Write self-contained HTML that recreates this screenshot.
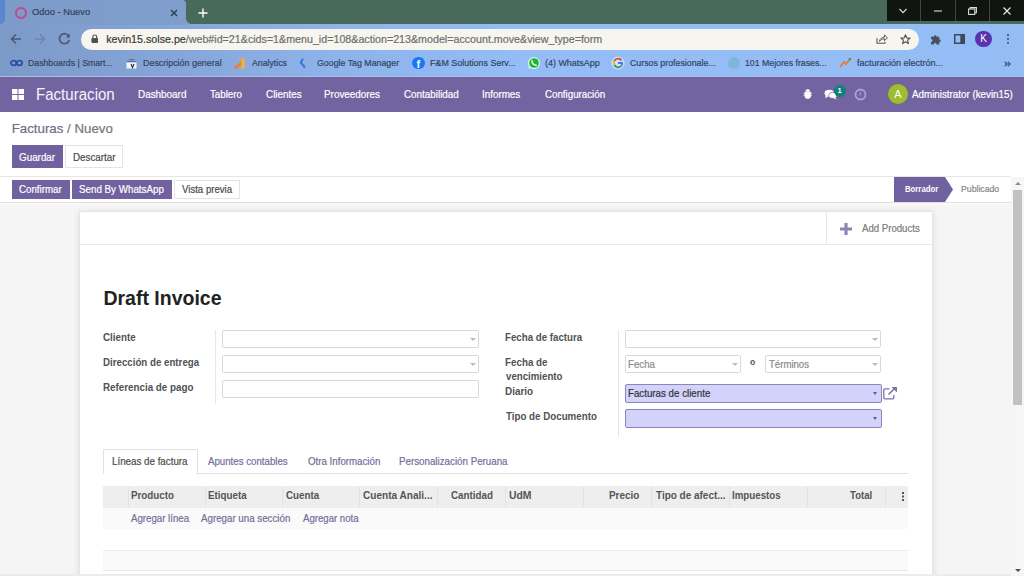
<!DOCTYPE html>
<html><head><meta charset="utf-8">
<style>
*{box-sizing:border-box;margin:0;padding:0}
html,body{width:1024px;height:576px;overflow:hidden;background:#f5f5f5;font-family:"Liberation Sans",sans-serif;position:relative}
.a{position:absolute;white-space:nowrap}
.t{position:absolute;white-space:nowrap;line-height:1;transform-origin:0 0}
/* chrome */
#titlebar{left:0;top:0;width:1024px;height:24px;background:#486a5b}
#chromebar{left:0;top:24px;width:1024px;height:53px;background:linear-gradient(90deg,#7c9ac7 0px,#86a6da 180px,#8db3ea 330px,#94bcf6 520px,#95bdf5 1024px)}
#tab{left:0;top:0;width:186px;height:25px;background:linear-gradient(90deg,#7d9bc8 0,#809ecc 181px);border-radius:2px 4px 0 0}
#leftstrip{left:0;top:0;width:5px;height:24px;background:#5a86cf;border-radius:0 0 6px 0}
#winctl{left:887px;top:0;width:137px;height:21px;background:#111512}
.sep{position:absolute;top:0;width:1px;height:21px;background:#3a4a40}
#nav{left:0;top:77px;width:1024px;height:35px;background:#7164a0}
#cp{left:0;top:112px;width:1024px;height:65px;background:#fff}
#status{left:0;top:176px;width:1011px;height:27px;background:#fff;border-top:1px solid #e6e6e6;border-bottom:1px solid #e2e2e2}
.btnp{position:absolute;background:#7062a0;color:#fff;font-size:9.8px;line-height:1}
.btnw{position:absolute;background:#fff;border:1px solid #e4e4e4;color:#444;font-size:9.8px;line-height:1}
#sheet{left:79px;top:211px;width:854px;height:380px;background:#fff;border:1px solid #e4e4e4;box-shadow:0 1px 7px rgba(0,0,0,.1)}
.lbl{position:absolute;font-weight:bold;font-size:9.75px;color:#4e4e4e;line-height:1;white-space:nowrap}
.inp{position:absolute;height:18px;border:1px solid #d9d9d9;border-radius:2px;background:#fff}
.req{position:absolute;background:#d2d2fb;border:1px solid #8a86b8;border-radius:2px}
.caret{position:absolute;width:0;height:0;border-left:3px solid transparent;border-right:3px solid transparent;border-top:3px solid #bbb}
.th{position:absolute;font-weight:bold;font-size:9.75px;color:#555;line-height:1;white-space:nowrap}
.vs{position:absolute;top:486px;width:1px;height:21px;background:#e2e2e2}
</style></head><body>
<div id="titlebar" class="a"></div>
<div id="chromebar" class="a"></div>
<div id="tab" class="a"></div>
<div id="leftstrip" class="a"></div>
<div class="a" style="left:186px;top:19px;width:5px;height:5px;background:radial-gradient(circle at 100% 0,#486a5b 4.5px,#809ecc 5px)"></div>
<!-- tab content -->
<div class="a" style="left:15px;top:6.5px;width:12px;height:12px;border:2.8px solid #c8448f;border-radius:50%"></div>
<svg class="a" style="left:170px;top:8.5px" width="8" height="8" viewBox="0 0 8 8"><path d="M1 1L7 7M7 1L1 7" stroke="#2c3a55" stroke-width="1.4"/></svg>
<svg class="a" style="left:197.5px;top:7.8px" width="10" height="10" viewBox="0 0 10 10"><path d="M5 0.5V9.5M0.5 5H9.5" stroke="#fff" stroke-width="1.4"/></svg>
<div id="winctl" class="a">
  <div class="sep" style="left:33px"></div><div class="sep" style="left:68px"></div><div class="sep" style="left:102px"></div>
  <svg class="a" style="left:12px;top:8px" width="8" height="6" viewBox="0 0 8 6"><path d="M0.5 1L4 4.6L7.5 1" stroke="#ddd" stroke-width="1.1" fill="none"/></svg>
  <svg class="a" style="left:47px;top:10px" width="8" height="2" viewBox="0 0 8 2"><path d="M0 1H8" stroke="#ddd" stroke-width="1.1"/></svg>
  <svg class="a" style="left:80.5px;top:6.5px" width="9" height="8" viewBox="0 0 9 8"><rect x="0.6" y="2" width="6.2" height="5.4" fill="none" stroke="#ddd" stroke-width="1.1"/><path d="M2.2 2V0.6H8.4V5.8H6.8" fill="none" stroke="#ddd" stroke-width="1.1"/></svg>
  <svg class="a" style="left:116px;top:6.8px" width="8" height="8" viewBox="0 0 8 8"><path d="M0.5 0.5L7.5 7.5M7.5 0.5L0.5 7.5" stroke="#eee" stroke-width="1.1"/></svg>
</div>
<!-- toolbar -->
<svg class="a" style="left:9px;top:31.5px" width="14" height="14" viewBox="0 0 14 14"><path d="M12 7H2.5M7 2.5L2.5 7L7 11.5" stroke="#4a5a70" stroke-width="1.6" fill="none"/></svg>
<svg class="a" style="left:33px;top:31.5px" width="14" height="14" viewBox="0 0 14 14"><path d="M2 7H11.5M7 2.5L11.5 7L7 11.5" stroke="#7287a8" stroke-width="1.6" fill="none"/></svg>
<svg class="a" style="left:57px;top:30.5px" width="15" height="15" viewBox="0 0 15 15"><path d="M11.8 5.2A5 5 0 1 0 12.3 9" stroke="#4a5a70" stroke-width="1.7" fill="none"/><path d="M12.8 2.5V6.5H8.8Z" fill="#4a5a70"/></svg>
<div class="a" style="left:81px;top:29px;width:838px;height:21px;background:#f7f6ee;border-radius:11px"></div>
<svg class="a" style="left:90.5px;top:33.5px" width="7.5" height="9.5" viewBox="0 0 9 11"><rect x="0.5" y="4.5" width="8" height="6" rx="1" fill="#505050"/><path d="M2.2 4.8V3.2A2.3 2.3 0 0 1 6.8 3.2V4.8" stroke="#505050" stroke-width="1.3" fill="none"/></svg>
<svg class="a" style="left:875.5px;top:34px" width="12" height="10" viewBox="0 0 12 10"><path d="M1 4V9.3H9V7.8" stroke="#5a5a5a" stroke-width="1.1" fill="none"/><path d="M3.5 7.5C3.8 4.5 6 3.2 8.5 3.2V1L11.5 3.8L8.5 6.6V4.8C6.5 4.8 4.8 5.6 3.5 7.5Z" stroke="#5a5a5a" stroke-width="1" fill="none" stroke-linejoin="round"/></svg>
<svg class="a" style="left:900px;top:33.5px" width="11" height="11" viewBox="0 0 11 11"><path d="M5.5 0.8L6.8 3.9L10.1 4.1L7.6 6.2L8.4 9.6L5.5 7.8L2.6 9.6L3.4 6.2L0.9 4.1L4.2 3.9Z" stroke="#4a4a4a" stroke-width="1.1" fill="none" stroke-linejoin="round"/></svg>
<svg class="a" style="left:929.5px;top:33.5px" width="12" height="11" viewBox="0 0 12 11"><path d="M1 2.8H3.6A1.5 1.5 0 0 1 6.6 2.8H9.2V5.2A1.5 1.5 0 0 1 9.2 8.2V10.5H6.6A1.5 1.5 0 0 0 3.6 10.5H1V8A1.5 1.5 0 0 0 1 5Z" fill="#46515e"/></svg>
<svg class="a" style="left:954px;top:34px" width="11" height="10" viewBox="0 0 11 10"><rect x="0.75" y="0.75" width="9.5" height="8.5" stroke="#3e4a5a" stroke-width="1.5" fill="none"/><rect x="6.3" y="0.75" width="4" height="8.5" fill="#3e4a5a"/></svg>
<div class="a" style="left:975.2px;top:30.8px;width:16.6px;height:16.6px;border-radius:50%;background:#5a32ae;color:#fff;font-size:10px;line-height:16.6px;text-align:center">K</div>
<svg class="a" style="left:1005.5px;top:34px" width="4" height="10" viewBox="0 0 4 10"><circle cx="2" cy="1.2" r="1.1" fill="#4a5868"/><circle cx="2" cy="5" r="1.1" fill="#4a5868"/><circle cx="2" cy="8.8" r="1.1" fill="#4a5868"/></svg>
<!-- bookmarks -->
<svg class="a" style="left:10px;top:59px" width="13" height="8" viewBox="0 0 13 8"><ellipse cx="3.6" cy="4" rx="2.7" ry="2.3" stroke="#2950a6" stroke-width="1.8" fill="none"/><ellipse cx="9.4" cy="4" rx="2.7" ry="2.3" stroke="#2950a6" stroke-width="1.8" fill="none"/></svg>
<svg class="a" style="left:126px;top:58px" width="11" height="11" viewBox="0 0 11 11"><rect x="0.5" y="3" width="10" height="7.5" fill="#f2f5fc"/><rect x="0.5" y="3" width="10" height="1.3" fill="#5b6f99"/><rect x="3" y="1" width="5" height="1.2" fill="#5b6f99"/><path d="M5 6L6.5 9.5L8 6" stroke="#333" stroke-width="1.2" fill="none"/></svg>
<svg class="a" style="left:234px;top:57px" width="12" height="12" viewBox="0 0 12 12"><path d="M1.5 10.5L7.5 6" stroke="#e8833a" stroke-width="3" stroke-linecap="round"/><path d="M9 2V10.5" stroke="#f5b031" stroke-width="3.4" stroke-linecap="round"/></svg>
<svg class="a" style="left:299px;top:58px" width="9" height="11" viewBox="0 0 9 11"><path d="M3.5 1.5L1.8 4.5L5.5 9" stroke="#3a78d8" stroke-width="2.2" fill="none" stroke-linecap="round"/></svg>
<div class="a" style="left:412px;top:56.5px;width:12.5px;height:12.5px;border-radius:50%;background:#1877f2;color:#fff;font-weight:bold;font-size:11px;line-height:15px;text-align:center;overflow:hidden">f</div>
<svg class="a" style="left:527px;top:56px" width="14" height="14" viewBox="0 0 14 14"><path d="M7 1A6 6 0 1 1 3.6 12L1.2 12.8L2 10.4A6 6 0 0 1 7 1Z" fill="#d9f7de"/><circle cx="7" cy="7" r="4.8" fill="#1fb23a"/><path d="M5 4.5C5 7 6.5 9 9.2 9.3" stroke="#d9f7de" stroke-width="1.6" fill="none" stroke-linecap="round"/></svg>
<svg class="a" style="left:611px;top:56px" width="14" height="14" viewBox="0 0 14 14"><circle cx="7" cy="7" r="6.5" fill="#e4f0fb" opacity="0.7"/><path d="M10.6 4.6A4.2 4.2 0 0 0 3.2 5.2" stroke="#d8483a" stroke-width="1.8" fill="none"/><path d="M3.2 5.2A4.2 4.2 0 0 0 3.4 9" stroke="#f2b21c" stroke-width="1.8" fill="none"/><path d="M3.4 9A4.2 4.2 0 0 0 10.2 10" stroke="#2f9b50" stroke-width="1.8" fill="none"/><path d="M10.2 10A4.2 4.2 0 0 0 11.2 7H7" stroke="#3f7de8" stroke-width="1.8" fill="none"/></svg>
<div class="a" style="left:728px;top:57px;width:12px;height:12px;border-radius:50%;background:#7fb7d8"></div>
<svg class="a" style="left:839px;top:57px" width="12" height="11" viewBox="0 0 12 11"><path d="M1 10L5 5L7 7L11 2" stroke="#e07b39" stroke-width="1.8" fill="none"/><circle cx="11" cy="2" r="1.3" fill="#2e9e5b"/></svg>
<svg class="a" style="left:1003.5px;top:60.5px" width="7" height="6" viewBox="0 0 7 6"><path d="M0.8 0.8L3 3L0.8 5.2M3.8 0.8L6 3L3.8 5.2" stroke="#34445e" stroke-width="1.2" fill="none"/></svg>
<div class="a" style="left:0;top:76px;width:1024px;height:1px;background:#aebce6"></div>
<!-- odoo nav -->
<div id="nav" class="a"></div>
<svg class="a" style="left:12px;top:89px" width="12" height="11" viewBox="0 0 12 11"><rect x="0" y="0" width="5.5" height="5" fill="#fff"/><rect x="6.5" y="0" width="5.5" height="5" fill="#fff"/><rect x="0" y="6" width="5.5" height="5" fill="#fff"/><rect x="6.5" y="6" width="5.5" height="5" fill="#fff"/></svg>
<svg class="a" style="left:802.5px;top:89.3px" width="9.5" height="9.5" viewBox="0 0 10 10"><path d="M3 2.5A2 2 0 0 1 7 2.5Z M2 3.5H8V7A3 3 0 0 1 2 7Z M0.5 4.5H2M8 4.5H9.5M0.5 7H2M8 7H9.5" fill="#fff" stroke="#fff" stroke-width="0.8"/></svg>
<svg class="a" style="left:823.5px;top:88.5px" width="14" height="11" viewBox="0 0 15 12"><ellipse cx="5.5" cy="4.5" rx="5" ry="3.6" fill="#fff"/><path d="M2 7L1 10L5 8Z" fill="#fff"/><ellipse cx="9.5" cy="7" rx="4.5" ry="3.2" fill="#fff" stroke="#7164a0" stroke-width="0.8"/><path d="M12 9L13.5 11.5L10 10Z" fill="#fff"/></svg>
<div class="a" style="left:833.5px;top:84.5px;width:12px;height:12px;border-radius:50%;background:#10807a;color:#fff;font-size:7.5px;font-weight:bold;line-height:12px;text-align:center">1</div>
<svg class="a" style="left:854px;top:87.5px" width="13" height="13" viewBox="0 0 13 13"><circle cx="6.5" cy="6.5" r="5" stroke="#aaa2cf" stroke-width="1.8" fill="none"/><path d="M6.5 3.8V6.8H4.8" stroke="#9d95c4" stroke-width="1.1" fill="none"/></svg>
<div class="a" style="left:888px;top:84px;width:20px;height:20px;border-radius:50%;background:#9fbd2e;color:#fff;font-size:11px;line-height:20px;text-align:center">A</div>
<!-- control panel -->
<div id="cp" class="a"></div>
<div class="btnp" style="left:12px;top:145px;width:51px;height:23px"></div>
<div class="btnw" style="left:65px;top:145px;width:57.5px;height:23px"></div>
<div id="status" class="a"></div>
<div class="a" style="left:0;top:203px;width:1011px;height:4px;background:linear-gradient(#f9f9f9,#f5f5f5)"></div>
<div class="btnp" style="left:12px;top:180px;width:58px;height:19px"></div>
<div class="btnp" style="left:72px;top:180px;width:99.5px;height:19px"></div>
<div class="btnw" style="left:174px;top:180px;width:66px;height:19px"></div>
<svg class="a" style="left:894px;top:177px" width="60" height="25" viewBox="0 0 60 25"><path d="M0 0H51L59 12.5L51 25H0Z" fill="#7062a0"/></svg>
<!-- scrollbar -->
<div class="a" style="left:1011px;top:177px;width:13px;height:399px;background:#f6f6f6"></div>
<div class="a" style="left:1013px;top:190px;width:9px;height:215px;background:#c1c1c1"></div>
<div class="caret" style="left:1014.5px;top:569px;border-top-color:#505050"></div>
<div class="a" style="left:1014.5px;top:182px;width:0;height:0;border-left:3.5px solid transparent;border-right:3.5px solid transparent;border-bottom:3.5px solid #8a8a8a"></div>
<!-- sheet -->
<div id="sheet" class="a"></div>
<div class="a" style="left:80px;top:244px;width:852px;height:1px;background:#e8e8e8"></div>
<div class="a" style="left:826px;top:212px;width:1px;height:32px;background:#e8e8e8"></div>
<svg class="a" style="left:839px;top:222px" width="14" height="14" viewBox="0 0 14 14"><path d="M7 1V13M1 7H13" stroke="#8c86b4" stroke-width="3.2"/></svg>
<!-- left group -->
<div class="a" style="left:215px;top:330px;width:1px;height:74px;background:#e6e6e6"></div>
<div class="inp" style="left:222px;top:330px;width:257px"></div>
<div class="inp" style="left:222px;top:355px;width:257px"></div>
<div class="inp" style="left:222px;top:379.5px;width:257px"></div>
<div class="caret" style="left:470px;top:338px"></div>
<div class="caret" style="left:470px;top:363px"></div>
<!-- right group -->
<div class="a" style="left:617.5px;top:330px;width:1px;height:107px;background:#e6e6e6"></div>
<div class="inp" style="left:624.5px;top:330px;width:256.5px"></div>
<div class="caret" style="left:872px;top:338px"></div>
<div class="inp" style="left:624.5px;top:355px;width:116.5px"></div>
<div class="caret" style="left:732px;top:363px"></div>
<div class="t" style="left:750px;top:358px;font-size:8.5px;font-weight:bold;color:#555">o</div>
<div class="inp" style="left:764.5px;top:355px;width:116.5px"></div>
<div class="caret" style="left:872px;top:363px"></div>
<div class="req" style="left:624.5px;top:384px;width:257.5px;height:19px"></div>
<div class="a" style="left:873px;top:392px;width:0;height:0;border-left:2.8px solid transparent;border-right:2.8px solid transparent;border-top:3.2px solid #5f5b94"></div>
<div class="req" style="left:624.5px;top:408.5px;width:257.5px;height:19px"></div>
<div class="a" style="left:873px;top:417px;width:0;height:0;border-left:2.8px solid transparent;border-right:2.8px solid transparent;border-top:3.2px solid #5f5b94"></div>
<svg class="a" style="left:883px;top:386px" width="15" height="14" viewBox="0 0 15 14"><path d="M6.5 2.8H1.8A1 1 0 0 0 0.8 3.8V11.8A1 1 0 0 0 1.8 12.8H9.8A1 1 0 0 0 10.8 11.8V9" stroke="#7a76a6" stroke-width="1.3" fill="none"/><path d="M5.5 8.5L12 2" stroke="#7a76a6" stroke-width="1.6"/><path d="M8.5 1H14V6.5Z" fill="#7a76a6"/></svg>
<!-- tabs -->
<div class="a" style="left:103px;top:473px;width:805px;height:1px;background:#e2e2e2"></div>
<div class="a" style="left:103px;top:448.5px;width:94.5px;height:25.5px;background:#fff;border:1px solid #e2e2e2;border-bottom:none"></div>
<!-- table -->
<div class="a" style="left:103px;top:486px;width:805px;height:21.5px;background:#eeeeee"></div>
<div class="vs" style="left:127.5px"></div>
<div class="vs" style="left:204.5px"></div>
<div class="vs" style="left:282px"></div>
<div class="vs" style="left:359px"></div>
<div class="vs" style="left:436.5px"></div>
<div class="vs" style="left:505px"></div>
<div class="vs" style="left:582.5px"></div>
<div class="vs" style="left:651px"></div>
<div class="vs" style="left:728.5px"></div>
<div class="vs" style="left:807px"></div>
<div class="vs" style="left:884.5px"></div>
<svg class="a" style="left:901px;top:491px" width="4" height="10" viewBox="0 0 4 10"><rect x="1" y="1" width="2" height="2" fill="#555"/><rect x="1" y="4.5" width="2" height="2" fill="#555"/><rect x="1" y="8" width="2" height="2" fill="#555"/></svg>
<div class="a" style="left:103px;top:508px;width:805px;height:21px;background:#fafafa"></div>
<div class="a" style="left:103px;top:550px;width:805px;height:1px;background:#ececec"></div>
<div class="a" style="left:103px;top:551px;width:805px;height:19px;background:#fafafa"></div>
<div class="a" style="left:103px;top:570px;width:805px;height:1px;background:#e6e6e6"></div>
<div class="a" style="left:0;top:574px;width:1011px;height:2px;background:#ececec"></div>
<div class="t" style="left:32.43px;top:7.23px;font-size:9.8px;-webkit-text-stroke:0.2px currentColor;color:#33425e;transform:scaleX(0.9541);">Odoo - Nuevo</div>
<div class="t" style="left:106.16px;top:33.89px;font-size:10.7px;-webkit-text-stroke:0.2px currentColor;color:#6e6e6e;"><span style="color:#3a3a3a">kevin15.solse.pe</span>/web#id=21&amp;cids=1&amp;menu_id=108&amp;action=213&amp;model=account.move&amp;view_type=form</div>
<div class="t" style="left:28.00px;top:57.88px;font-size:9.5px;-webkit-text-stroke:0.2px currentColor;color:#34445e;transform:scaleX(0.9180);">Dashboards | Smart...</div>
<div class="t" style="left:143.19px;top:57.88px;font-size:9.5px;-webkit-text-stroke:0.2px currentColor;color:#34445e;transform:scaleX(0.9369);">Descripción general</div>
<div class="t" style="left:252.20px;top:57.88px;font-size:9.5px;-webkit-text-stroke:0.2px currentColor;color:#34445e;transform:scaleX(0.9171);">Analytics</div>
<div class="t" style="left:317.16px;top:57.88px;font-size:9.5px;-webkit-text-stroke:0.2px currentColor;color:#34445e;transform:scaleX(0.9271);">Google Tag Manager</div>
<div class="t" style="left:429.69px;top:57.88px;font-size:9.5px;-webkit-text-stroke:0.2px currentColor;color:#34445e;transform:scaleX(0.9390);">F&amp;M Solutions Serv...</div>
<div class="t" style="left:544.96px;top:57.88px;font-size:9.5px;-webkit-text-stroke:0.2px currentColor;color:#34445e;transform:scaleX(0.9412);">(4) WhatsApp</div>
<div class="t" style="left:630.16px;top:57.88px;font-size:9.5px;-webkit-text-stroke:0.2px currentColor;color:#34445e;transform:scaleX(0.9276);">Cursos profesionale...</div>
<div class="t" style="left:745.39px;top:57.88px;font-size:9.5px;-webkit-text-stroke:0.2px currentColor;color:#34445e;transform:scaleX(0.9197);">101 Mejores frases...</div>
<div class="t" style="left:856.51px;top:57.88px;font-size:9.5px;-webkit-text-stroke:0.2px currentColor;color:#34445e;transform:scaleX(0.9467);">facturación electrón...</div>
<div class="t" style="left:35.59px;top:87.17px;font-size:15.8px;-webkit-text-stroke:0.2px currentColor;color:#f6f2fc;transform:scaleX(0.9540);-webkit-text-stroke:0;">Facturacion</div>
<div class="t" style="left:137.91px;top:89.84px;font-size:10.4px;-webkit-text-stroke:0.2px currentColor;color:#fff;transform:scaleX(0.9523);">Dashboard</div>
<div class="t" style="left:210.01px;top:89.84px;font-size:10.4px;-webkit-text-stroke:0.2px currentColor;color:#fff;transform:scaleX(0.9366);">Tablero</div>
<div class="t" style="left:265.50px;top:89.84px;font-size:10.4px;-webkit-text-stroke:0.2px currentColor;color:#fff;transform:scaleX(0.9526);">Clientes</div>
<div class="t" style="left:324.21px;top:89.84px;font-size:10.4px;-webkit-text-stroke:0.2px currentColor;color:#fff;transform:scaleX(0.9512);">Proveedores</div>
<div class="t" style="left:404.31px;top:89.84px;font-size:10.4px;-webkit-text-stroke:0.2px currentColor;color:#fff;transform:scaleX(0.9486);">Contabilidad</div>
<div class="t" style="left:482.01px;top:89.84px;font-size:10.4px;-webkit-text-stroke:0.2px currentColor;color:#fff;transform:scaleX(0.9462);">Informes</div>
<div class="t" style="left:544.51px;top:89.84px;font-size:10.4px;-webkit-text-stroke:0.2px currentColor;color:#fff;transform:scaleX(0.9371);">Configuración</div>
<div class="t" style="left:912.00px;top:89.54px;font-size:10.4px;-webkit-text-stroke:0.2px currentColor;color:#fff;transform:scaleX(0.9429);">Administrator (kevin15)</div>
<div class="t" style="left:11.64px;top:122.17px;font-size:13.3px;-webkit-text-stroke:0.2px currentColor;color:#777;"><span style="color:#6f6b88">Facturas</span> / Nuevo</div>
<div class="t" style="left:19.21px;top:151.72px;font-size:10.5px;-webkit-text-stroke:0.2px currentColor;color:#fff;transform:scaleX(0.9377);">Guardar</div>
<div class="t" style="left:72.52px;top:151.72px;font-size:10.5px;-webkit-text-stroke:0.2px currentColor;color:#4a4a4a;transform:scaleX(0.9341);">Descartar</div>
<div class="t" style="left:19.41px;top:183.52px;font-size:10.5px;-webkit-text-stroke:0.2px currentColor;color:#fff;transform:scaleX(0.9245);">Confirmar</div>
<div class="t" style="left:79.41px;top:183.52px;font-size:10.5px;-webkit-text-stroke:0.2px currentColor;color:#fff;transform:scaleX(0.9319);">Send By WhatsApp</div>
<div class="t" style="left:181.60px;top:183.52px;font-size:10.5px;-webkit-text-stroke:0.2px currentColor;color:#4a4a4a;transform:scaleX(0.9158);">Vista previa</div>
<div class="t" style="left:905.13px;top:185.38px;font-size:8.8px;font-weight:700;color:#fff;transform:scaleX(0.8828);">Borrador</div>
<div class="t" style="left:961.00px;top:185.29px;font-size:8.8px;-webkit-text-stroke:0.2px currentColor;color:#888;transform:scaleX(0.9886);">Publicado</div>
<div class="t" style="left:861.50px;top:223.84px;font-size:10.4px;-webkit-text-stroke:0.2px currentColor;color:#7a7a7a;transform:scaleX(0.9256);">Add Products</div>
<div class="t" style="left:103.43px;top:288.77px;font-size:19.5px;font-weight:700;color:#222;">Draft Invoice</div>
<div class="t" style="left:102.81px;top:332.95px;font-size:10.3px;font-weight:700;color:#525252;transform:scaleX(0.9507);">Cliente</div>
<div class="t" style="left:102.82px;top:357.95px;font-size:10.3px;font-weight:700;color:#525252;transform:scaleX(0.9437);">Dirección de entrega</div>
<div class="t" style="left:102.81px;top:382.65px;font-size:10.3px;font-weight:700;color:#525252;transform:scaleX(0.9513);">Referencia de pago</div>
<div class="t" style="left:505.22px;top:333.25px;font-size:10.3px;font-weight:700;color:#525252;transform:scaleX(0.9425);">Fecha de factura</div>
<div class="t" style="left:505.21px;top:358.25px;font-size:10.3px;font-weight:700;color:#525252;transform:scaleX(0.9529);">Fecha de</div>
<div class="t" style="left:505.80px;top:371.85px;font-size:10.3px;font-weight:700;color:#525252;transform:scaleX(0.9401);">vencimiento</div>
<div class="t" style="left:505.21px;top:386.75px;font-size:10.3px;font-weight:700;color:#525252;transform:scaleX(0.9627);">Diario</div>
<div class="t" style="left:505.70px;top:411.65px;font-size:10.3px;font-weight:700;color:#525252;transform:scaleX(0.9474);">Tipo de Documento</div>
<div class="t" style="left:627.82px;top:358.82px;font-size:10.5px;-webkit-text-stroke:0.2px currentColor;color:#8a8a8a;transform:scaleX(0.9231);">Fecha</div>
<div class="t" style="left:768.71px;top:358.82px;font-size:10.5px;-webkit-text-stroke:0.2px currentColor;color:#8a8a8a;transform:scaleX(0.9136);">Términos</div>
<div class="t" style="left:627.82px;top:388.22px;font-size:10.5px;-webkit-text-stroke:0.2px currentColor;color:#333;transform:scaleX(0.9281);">Facturas de cliente</div>
<div class="t" style="left:112.32px;top:455.52px;font-size:10.5px;-webkit-text-stroke:0.2px currentColor;color:#4c4c4c;transform:scaleX(0.9310);">Líneas de factura</div>
<div class="t" style="left:208.20px;top:455.52px;font-size:10.5px;-webkit-text-stroke:0.2px currentColor;color:#716e99;transform:scaleX(0.9224);">Apuntes contables</div>
<div class="t" style="left:307.61px;top:455.52px;font-size:10.5px;-webkit-text-stroke:0.2px currentColor;color:#716e99;transform:scaleX(0.9250);">Otra Información</div>
<div class="t" style="left:398.82px;top:455.52px;font-size:10.5px;-webkit-text-stroke:0.2px currentColor;color:#716e99;transform:scaleX(0.9298);">Personalización Peruana</div>
<div class="t" style="left:131.31px;top:490.65px;font-size:10.3px;font-weight:700;color:#555;transform:scaleX(0.9533);">Producto</div>
<div class="t" style="left:208.16px;top:490.65px;font-size:10.3px;font-weight:700;color:#555;transform:scaleX(0.9500);">Etiqueta</div>
<div class="t" style="left:285.51px;top:490.65px;font-size:10.3px;font-weight:700;color:#555;transform:scaleX(0.9484);">Cuenta</div>
<div class="t" style="left:362.70px;top:490.65px;font-size:10.3px;font-weight:700;color:#555;transform:scaleX(0.9769);">Cuenta Anali...</div>
<div class="t" style="left:451.21px;top:490.65px;font-size:10.3px;font-weight:700;color:#555;transform:scaleX(0.9507);">Cantidad</div>
<div class="t" style="left:508.78px;top:490.65px;font-size:10.3px;font-weight:700;color:#555;transform:scaleX(1.0075);">UdM</div>
<div class="t" style="left:609.11px;top:490.65px;font-size:10.3px;font-weight:700;color:#555;transform:scaleX(0.9623);">Precio</div>
<div class="t" style="left:655.50px;top:490.65px;font-size:10.3px;font-weight:700;color:#555;transform:scaleX(0.9673);">Tipo de afect...</div>
<div class="t" style="left:732.12px;top:490.65px;font-size:10.3px;font-weight:700;color:#555;transform:scaleX(0.9462);">Impuestos</div>
<div class="t" style="left:849.80px;top:490.65px;font-size:10.3px;font-weight:700;color:#555;transform:scaleX(0.9333);">Total</div>
<div class="t" style="left:130.60px;top:513.32px;font-size:10.5px;-webkit-text-stroke:0.2px currentColor;color:#716e99;transform:scaleX(0.9210);">Agregar línea</div>
<div class="t" style="left:201.40px;top:513.32px;font-size:10.5px;-webkit-text-stroke:0.2px currentColor;color:#716e99;transform:scaleX(0.9277);">Agregar una sección</div>
<div class="t" style="left:302.80px;top:513.32px;font-size:10.5px;-webkit-text-stroke:0.2px currentColor;color:#716e99;transform:scaleX(0.9152);">Agregar nota</div>
</body></html>
